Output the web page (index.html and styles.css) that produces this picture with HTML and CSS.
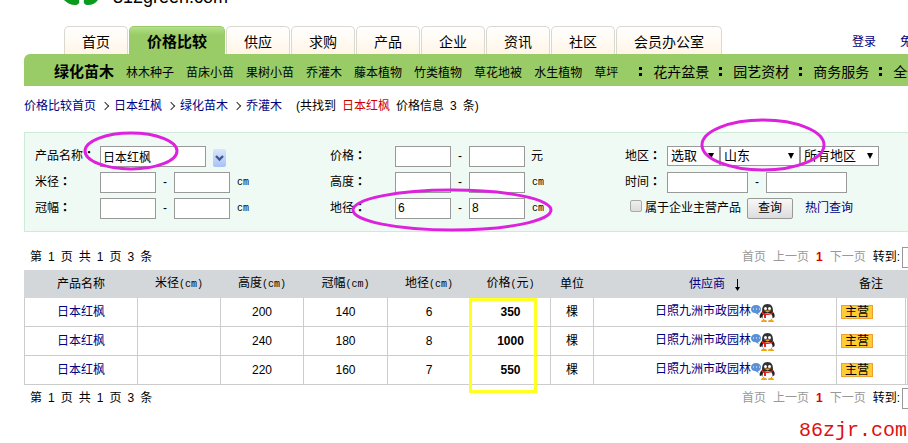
FILE: index.html
```html
<!DOCTYPE html>
<html lang="zh-CN">
<head>
    <meta charset="UTF-8">
    <meta name="viewport" content="width=device-width, initial-scale=1.0">
    <title>价格比较</title>
    <link rel="stylesheet" href="styles.css">
</head>
<body>
<div class="page">

    <!-- Logo -->
    <header class="site-header">
        <svg class="logo-mark" width="36" height="12" viewBox="0 0 36 12">
            <path d="M2 0h15c1 3-1 5-4 5C9 5 5 3 2 0z" fill="#0a9a1c"/>
            <path d="M22 0h14c-2 3-6 5-10 5c-3 0-5-2-4-5z" fill="#0a9a1c"/>
        </svg>
        <span class="logo-text">312green.com</span>
    </header>

    <!-- Tabs -->
    <div class="top-row">
        <nav class="tabs">
            <a class="tab" href="#">首页</a>
            <a class="tab tab-active" href="#">价格比较</a>
            <a class="tab" href="#">供应</a>
            <a class="tab" href="#">求购</a>
            <a class="tab" href="#">产品</a>
            <a class="tab" href="#">企业</a>
            <a class="tab" href="#">资讯</a>
            <a class="tab" href="#">社区</a>
            <a class="tab tab-wide" href="#">会员办公室</a>
        </nav>
        <div class="user-links">
            <a href="#">登录</a>
            <a href="#">免费注册</a>
        </div>
    </div>

    <nav class="subnav">
        <a class="subnav-main" href="#">绿化苗木</a>
        <a href="#">林木种子</a>
        <a href="#">苗床小苗</a>
        <a href="#">果树小苗</a>
        <a href="#">乔灌木</a>
        <a href="#">藤本植物</a>
        <a href="#">竹类植物</a>
        <a href="#">草花地被</a>
        <a href="#">水生植物</a>
        <a href="#">草坪</a>
        <div class="subnav-groups">
            <a href="#">花卉盆景</a>
            <a href="#">园艺资材</a>
            <a href="#">商务服务</a>
            <a href="#">全部</a>
        </div>
    </nav>

    <!-- Breadcrumb -->
    <div class="crumbs">
        <a href="#">价格比较首页</a>
        <i class="crumb-arrow"></i>
        <a href="#">日本红枫</a>
        <i class="crumb-arrow"></i>
        <a href="#">绿化苗木</a>
        <i class="crumb-arrow"></i>
        <a href="#">乔灌木</a>
        <p class="found"><span>(共找到</span><em>日本红枫</em><span>价格信息</span><span>3</span><span>条)</span></p>
    </div>

    <!-- Search form -->
    <form class="search">
        <div class="search-col">
            <div class="field">
                <label for="name">产品名称<span class="colon" lang="zh-TW">：</span></label>
                <input class="box box-name" id="name" type="text" value="日本红枫">
                <button class="picker" type="button" aria-label="选择产品">
                    <svg width="13" height="18" viewBox="0 0 13 18"><path d="M3 7l3.500 3.500L10 7" fill="none" stroke="#3f5a93" stroke-width="2.400"/></svg>
                </button>
            </div>
            <div class="field">
                <label for="mj1">米径<span class="colon" lang="zh-TW">：</span></label>
                <input class="box" id="mj1" type="text">
                <span class="dash">-</span>
                <input class="box" type="text" aria-label="米径上限">
                <span class="unit">cm</span>
            </div>
            <div class="field">
                <label for="gf1">冠幅<span class="colon" lang="zh-TW">：</span></label>
                <input class="box" id="gf1" type="text">
                <span class="dash">-</span>
                <input class="box" type="text" aria-label="冠幅上限">
                <span class="unit">cm</span>
            </div>
        </div>
        <div class="search-col">
            <div class="field">
                <label for="jg1">价格<span class="colon" lang="zh-TW">：</span></label>
                <input class="box" id="jg1" type="text">
                <span class="dash">-</span>
                <input class="box" type="text" aria-label="价格上限">
                <span class="yuan">元</span>
            </div>
            <div class="field">
                <label for="gd1">高度<span class="colon" lang="zh-TW">：</span></label>
                <input class="box" id="gd1" type="text">
                <span class="dash">-</span>
                <input class="box" type="text" aria-label="高度上限">
                <span class="unit">cm</span>
            </div>
            <div class="field">
                <label for="dj1">地径<span class="colon" lang="zh-TW">：</span></label>
                <input class="box" id="dj1" type="text" value="6">
                <span class="dash">-</span>
                <input class="box" type="text" value="8" aria-label="地径上限">
                <span class="unit">cm</span>
            </div>
        </div>
        <div class="search-col search-col-last">
            <div class="field">
                <label for="area">地区<span class="colon" lang="zh-TW">：</span></label>
                <span class="drop"><select class="area area-small" id="area"><option>选取</option></select></span>
                <span class="drop"><select class="area area-big" aria-label="省份"><option>山东</option></select></span>
                <span class="drop"><select class="area" aria-label="城市"><option>所有地区</option></select></span>
            </div>
            <div class="field">
                <label for="time1">时间<span class="colon" lang="zh-TW">：</span></label>
                <input class="box box-time" id="time1" type="text">
                <span class="dash">-</span>
                <input class="box box-time" type="text" aria-label="结束时间">
            </div>
            <div class="field">
                <input class="tick" id="main" type="checkbox">
                <label class="tick-label" for="main">属于企业主营产品</label>
                <button class="submit" type="button">查询</button>
                <a href="#">热门查询</a>
            </div>
        </div>
        <svg class="ring ring-name" width="96" height="40"><ellipse cx="48" cy="20" rx="46" ry="18"/></svg>
        <svg class="ring ring-ground" width="202" height="44"><ellipse cx="101" cy="22" rx="99" ry="20"/></svg>
        <svg class="ring ring-area" width="126" height="55"><ellipse cx="63" cy="27" rx="61" ry="25"/></svg>
    </form>

    <!-- Results -->
    <div class="pager">
        <div class="pager-count"><span>第</span><span>1</span><span>页</span><span>共</span><span>1</span><span>页</span><span>3</span><span>条</span></div>
        <div class="pager-links">
            <span>首页</span><span>上一页</span><b>1</b><span>下一页</span>
            <label for="goto1">转到:</label><input class="box goto" id="goto1" type="text">
        </div>
    </div>

    <div class="results">
        <table class="prices">
            <colgroup>
                <col class="c-name"><col class="c-size"><col class="c-size"><col class="c-mid"><col class="c-size"><col class="c-price"><col class="c-unit"><col class="c-seller"><col class="c-note"><col>
            </colgroup>
            <thead>
                <tr>
                    <th>产品名称</th>
                    <th>米径<span class="unit">(cm)</span></th>
                    <th>高度<span class="unit">(cm)</span></th>
                    <th>冠幅<span class="unit">(cm)</span></th>
                    <th>地径<span class="unit">(cm)</span></th>
                    <th>价格<span class="unit">(</span>元<span class="unit">)</span></th>
                    <th>单位</th>
                    <th><a href="#">供应商</a><svg class="sort" width="7" height="12" viewBox="0 0 7 12"><path d="M3 0h1v8h2L3.500 12L1 8h2z"/></svg></th>
                    <th>备注</th>
                    <th></th>
                </tr>
            </thead>
            <tbody>
                <tr>
                    <td><a href="#">日本红枫</a></td>
                    <td></td>
                    <td>200</td>
                    <td>140</td>
                    <td>6</td>
                    <td class="price">350</td>
                    <td>棵</td>
                    <td><div class="seller"><a href="#">日照九洲市政园林</a><svg class="qq" width="24" height="18"><use href="#qq"/></svg></div></td>
                    <td class="note"><span class="tag">主营</span></td>
                    <td></td>
                </tr>
                <tr>
                    <td><a href="#">日本红枫</a></td>
                    <td></td>
                    <td>240</td>
                    <td>180</td>
                    <td>8</td>
                    <td class="price">1000</td>
                    <td>棵</td>
                    <td><div class="seller"><a href="#">日照九洲市政园林</a><svg class="qq" width="24" height="18"><use href="#qq"/></svg></div></td>
                    <td class="note"><span class="tag">主营</span></td>
                    <td></td>
                </tr>
                <tr>
                    <td><a href="#">日本红枫</a></td>
                    <td></td>
                    <td>220</td>
                    <td>160</td>
                    <td>7</td>
                    <td class="price">550</td>
                    <td>棵</td>
                    <td><div class="seller"><a href="#">日照九洲市政园林</a><svg class="qq" width="24" height="18"><use href="#qq"/></svg></div></td>
                    <td class="note"><span class="tag">主营</span></td>
                    <td></td>
                </tr>
            </tbody>
        </table>
        <div class="price-mark"></div>
    </div>

    <div class="pager">
        <div class="pager-count"><span>第</span><span>1</span><span>页</span><span>共</span><span>1</span><span>页</span><span>3</span><span>条</span></div>
        <div class="pager-links">
            <span>首页</span><span>上一页</span><b>1</b><span>下一页</span>
            <label for="goto2">转到:</label><input class="box goto" id="goto2" type="text">
        </div>
    </div>
</div>

<footer class="watermark">86zjr.com</footer>

<!-- Chat icon used in the seller column -->
<svg class="defs" width="0" height="0">
    <symbol id="qq" viewBox="0 0 24 18">
        <path d="M5 1c3 0 5 2 5 4s-1 4-3 4l1 2L4 9C1 9 0 7 0 5s2-4 5-4z" fill="#5b8fd6"/>
        <path d="M2 5h1M5 5h1M8 5h1" stroke="#fff"/>
        <path d="M11 8c-2 2-3 4-2 6l3-1zM22 8c2 2 2 4 1 6l-2-1z" fill="#222"/>
        <ellipse cx="16.500" cy="11" rx="6" ry="6" fill="#222"/>
        <ellipse cx="16.500" cy="13" rx="5" ry="4" fill="#fff"/>
        <path d="M11 8c0-5 1-8 5.500-8S22 3 22 8z" fill="#333"/>
        <circle cx="14.500" cy="4.500" r="1.500" fill="#fff"/>
        <circle cx="18.500" cy="4.500" r="1.500" fill="#fff"/>
        <path d="M13 6.500h7l-3.500 2z" fill="#f5a40c"/>
        <path d="M11 8c4 2 7 2 11 0v1c-2 2-5 2-7 2v3h-2v-3l-2-1z" fill="#e6201c"/>
        <path d="M10 18c0-3 6-3 6 0zM17 18c0-3 6-3 6 0z" fill="#f5a40c"/>
    </symbol>
</svg>
</body>
</html>
```

FILE: styles.css
```css
/* General Styling */
* {
    box-sizing: border-box;
}

body {
    margin: 0;
    font-family: "Liberation Sans", "Noto Sans CJK SC", sans-serif;
    font-size: 12px;
    line-height: 18px;
    color: #000;
    background: #fff;
    overflow: hidden;
}

a {
    color: #000080;
    text-decoration: none;
    white-space: nowrap;
}

.page {
    padding-left: 24px;
}

/* Logo */
.site-header {
    display: flex;
    align-items: flex-end;
    gap: 15px;
    height: 26px;
    padding: 0 0 22px 38px;
}

.logo-mark {
    flex: none;
    margin-bottom: -8px;
}

.logo-text {
    font-size: 18px;
    line-height: 14px;
}

/* Tabs */
.top-row {
    display: flex;
    height: 28px;
    padding-left: 40px;
}

.tabs {
    display: flex;
    flex: none;
    gap: 1px;
}

.tab {
    width: 64px;
    border: 1px solid #d9d9d0;
    border-bottom: 0;
    border-radius: 5px 5px 0 0;
    background: linear-gradient(#fff, #fff5e6);
    color: #000;
    font-size: 14px;
    line-height: 30px;
    text-align: center;
}

.tab-active {
    width: 96px;
    border-color: #99cc66;
    background: linear-gradient(#b5e08a, #99cc66 8px);
    font-size: 15px;
    font-weight: bold;
}

.tab-wide {
    width: 106px;
}

.user-links {
    display: flex;
    flex: none;
    gap: 24px;
    margin-left: 130px;
    line-height: 32px;
}

.subnav {
    display: flex;
    gap: 12px;
    height: 32px;
    padding: 3px 0 0 30px;
    border-radius: 6px 0 0 0;
    background: #99cc66;
    line-height: 32px;
}

.subnav a {
    flex: none;
    color: #000;
}

.subnav .subnav-main {
    font-size: 15px;
    font-weight: bold;
    line-height: 30px;
}

.subnav-groups {
    display: flex;
    flex: none;
    margin-left: 9px;
    font-size: 14px;
}

.subnav-groups a {
    display: flex;
    align-items: center;
    width: 80px;
    line-height: 30px;
}

.subnav-groups a::before {
    content: "";
    width: 3px;
    height: 3px;
    margin-right: 11px;
    border-top: 3px solid #000;
    border-bottom: 3px solid #000;
}

/* Breadcrumb */
.crumbs {
    display: flex;
    align-items: center;
    gap: 6px;
    height: 46px;
    padding-bottom: 6px;
}

.crumb-arrow {
    width: 6px;
    height: 6px;
    border-top: 1px solid #333;
    border-right: 1px solid #333;
    transform: rotate(45deg);
}

.found {
    display: flex;
    gap: 6px;
    margin: 0 0 0 8px;
}

.found em {
    color: #cc0000;
    font-style: normal;
}

/* Search form */
.search {
    position: relative;
    display: flex;
    height: 100px;
    padding: 10px 0 0 10px;
    border: 1px solid #cdebd6;
    border-right: 0;
    background: #f0faf5;
}

.search-col {
    flex: none;
    width: 295px;
}

.field {
    display: flex;
    align-items: center;
    height: 26px;
    white-space: nowrap;
}

.field label {
    flex: none;
    width: 65px;
}

.search-col-last .field label {
    width: 42px;
}

/* Centred full-width colon */
.colon {
    font-family: "Noto Sans CJK TC", sans-serif;
    font-weight: bold;
    line-height: 1;
}

.box {
    flex: none;
    width: 56px;
    height: 21px;
    padding: 0 2px;
    border: 1px solid #999;
    background: #fff;
    font: inherit;
}

.box-name {
    width: 106px;
}

.box-time {
    width: 81px;
}

.dash {
    width: 18px;
    text-align: center;
}

.unit {
    font-family: "Liberation Mono", monospace;
    font-size: 10px;
}

.field .unit {
    margin: 2px 0 0 7px;
}

.yuan {
    margin-left: 6px;
}

.picker {
    width: 13px;
    height: 18px;
    margin: 4px 0 0 7px;
    padding: 0;
    border: 0;
    border-radius: 2px;
    background: linear-gradient(#dbe6fd, #a9c2f5);
}

.picker svg {
    display: block;
}

.drop {
    position: relative;
    display: flex;
    flex: none;
}

.drop::after {
    content: "";
    position: absolute;
    top: 7px;
    right: 6px;
    border: 3px solid transparent;
    border-top: 6px solid #000;
    border-bottom: 0;
    pointer-events: none;
}

.area {
    width: 79px;
    height: 20px;
    padding: 0 14px 0 3px;
    appearance: none;
    border: 1px solid #999;
    border-radius: 0;
    background: #fff;
    color: #000;
    font: inherit;
    font-size: 13px;
}

.area-small {
    width: 53px;
}

.area-big {
    width: 80px;
}

.tick {
    width: 12px;
    height: 12px;
    margin: 0 3px 4px 5px;
    appearance: none;
    border: 1px solid #aaa;
    border-radius: 2px;
    background: linear-gradient(#eee, #ddd);
}

.search-col-last .field .tick-label {
    width: auto;
}

.submit {
    flex: none;
    width: 46px;
    height: 21px;
    margin: 0 12px 0 6px;
    padding: 0;
    border: 1px solid #999;
    border-radius: 2px;
    background: linear-gradient(#f8f8f8, #dcdcdc);
    font: inherit;
}

/* Hand-drawn rings over the form */
.ring {
    position: absolute;
    fill: none;
    stroke: #dd22dd;
    stroke-width: 3px;
    pointer-events: none;
}

.ring-name {
    left: 58px;
    top: -2px;
}

.ring-ground {
    left: 326px;
    top: 55px;
}

.ring-area {
    left: 675px;
    top: -15px;
}

/* Pager */
.pager {
    display: flex;
    justify-content: space-between;
    align-items: center;
    height: 26px;
    padding-left: 6px;
}

.search + .pager {
    margin-top: 12px;
}

.pager-count {
    display: flex;
    gap: 6px;
}

.pager-links {
    display: flex;
    align-items: center;
    gap: 7px;
    height: 21px;
    margin-right: -50px;
    color: #999;
}

.pager-links b {
    color: #dd0000;
}

.pager-links label {
    color: #000;
}

.goto {
    margin-left: -5px;
}

/* Results table */
.results {
    position: relative;
}

.prices {
    width: 100%;
    table-layout: fixed;
    border-collapse: collapse;
}

.prices th,
.prices td {
    height: 29px;
    padding: 0;
    border: 1px solid #ccc;
    text-align: center;
}

.prices th {
    height: 27px;
    border-color: #d3d7da;
    background: #d3d7da;
    font-weight: normal;
}

.c-name {
    width: 113px;
}

.c-size {
    width: 83px;
}

.c-mid {
    width: 84px;
}

.c-price {
    width: 80px;
}

.c-unit {
    width: 43px;
}

.c-seller {
    width: 243px;
}

.c-note {
    width: 69px;
}

.prices .price {
    font-weight: bold;
}

.sort {
    margin-left: 9px;
    vertical-align: middle;
}

.seller {
    display: flex;
    justify-content: center;
    height: 20px;
}

.qq {
    flex: none;
    align-self: flex-end;
}

.prices .note {
    padding-left: 4px;
    text-align: left;
}

.tag {
    display: block;
    width: 32px;
    border: 1px solid #f0a030;
    background: #ffcc33;
    line-height: 12px;
    text-align: center;
}

.price-mark {
    position: absolute;
    left: 445px;
    top: 28px;
    width: 68px;
    height: 95px;
    border: 3px solid #ffff22;
}

.watermark {
    padding-right: 1px;
    color: #e01010;
    font-family: "Liberation Mono", monospace;
    font-size: 20px;
    line-height: 40px;
    text-align: right;
}

.defs {
    position: absolute;
}
```
